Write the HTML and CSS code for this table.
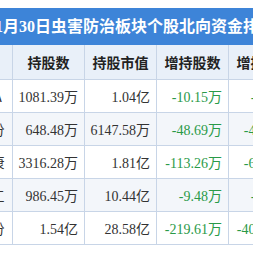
FILE: index.html
```html
<!DOCTYPE html>
<html lang="zh">
<head>
    <meta charset="UTF-8">
    <title>虫害防治板块个股北向资金</title>
    <link rel="stylesheet" href="styles.css">
</head>
<body>
    <div class="page">
        <div class="title">1月30日虫害防治板块个股北向资金排行</div>
        <table class="rank">
            <thead>
                <tr>
                    <th>名称</th>
                    <th>持股数</th>
                    <th>持股市值</th>
                    <th>增持股数</th>
                    <th>增持市值</th>
                </tr>
            </thead>
            <tbody>
                <tr>
                    <td class="name">安道麦A</td>
                    <td>1081.39万</td>
                    <td>1.04亿</td>
                    <td class="down">-10.15万</td>
                    <td class="down">-9.74万</td>
                </tr>
                <tr>
                    <td class="name">利民股份</td>
                    <td>648.48万</td>
                    <td>6147.58万</td>
                    <td class="down">-48.69万</td>
                    <td class="down">-46.16万</td>
                </tr>
                <tr>
                    <td class="name">海利尔康</td>
                    <td>3316.28万</td>
                    <td>1.81亿</td>
                    <td class="down">-113.26万</td>
                    <td class="down">-61.85万</td>
                </tr>
                <tr>
                    <td class="name">扬农化工</td>
                    <td>986.45万</td>
                    <td>10.44亿</td>
                    <td class="down">-9.48万</td>
                    <td class="down">-98.3万</td>
                </tr>
                <tr>
                    <td class="name">广信股份</td>
                    <td>1.54亿</td>
                    <td>28.58亿</td>
                    <td class="down">-219.61万</td>
                    <td class="down">-407.43万</td>
                </tr>
            </tbody>
        </table>
    </div>
</body>
</html>
```

FILE: styles.css
```css
* {
    box-sizing: border-box;
    margin: 0;
    padding: 0;
}

body {
    background-color: #fff;
    font-family: "Liberation Serif", "Noto Sans CJK SC", serif;
    color: #333;
    overflow: hidden;
}

.page {
    padding-top: 8px;
    width: 253px;
    overflow: hidden;
}

.title {
    background-color: #3d84d8;
    color: #fff;
    height: 37px;
    line-height: 37px;
    font-size: 16px;
    font-weight: bold;
    white-space: nowrap;
    margin-left: -5px;
    width: 400px;
}

.rank {
    border-collapse: collapse;
    table-layout: fixed;
    width: 360px;
    margin-left: -60px;
}

.rank th,
.rank td {
    width: 72px;
    border: 1px solid #c8d5e7;
    white-space: nowrap;
    overflow: hidden;
}

.rank th {
    height: 34px;
    background-color: #e9f0f9;
    font-family: "Noto Sans CJK SC", sans-serif;
    font-size: 14px;
    font-weight: bold;
    color: #222;
    text-align: center;
    border-top: none;
}

.rank td {
    height: 33px;
    font-size: 14px;
    text-align: right;
    padding-right: 6px;
}

.rank td.name {
    text-align: center;
    padding-right: 0;
    font-family: "Noto Sans CJK SC", sans-serif;
}

.rank tbody tr:nth-child(even) td {
    background-color: #f3f6fa;
}

.rank td.down {
    color: #2a9a48;
}
```
